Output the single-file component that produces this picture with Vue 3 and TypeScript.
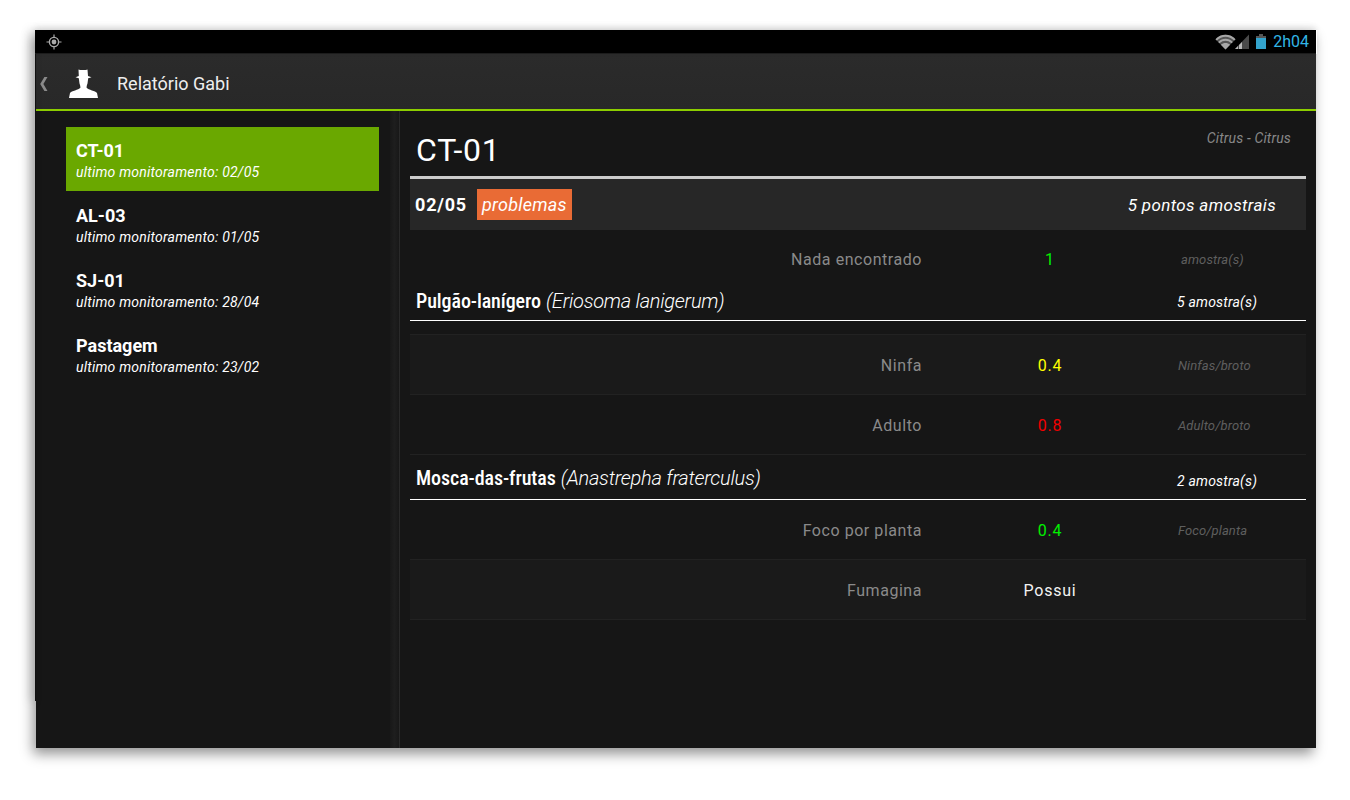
<script setup lang="ts">
interface Talhao {
  name: string
  last: string
}

interface Row {
  label: string
  value: string
  unit?: string
  color: string
  shaded?: boolean
}

interface Pest {
  name: string
  latin: string
  count: string
  cls: string
  rows: Row[]
}

const talhoes: Talhao[] = [
  { name: 'CT-01', last: '02/05' },
  { name: 'AL-03', last: '01/05' },
  { name: 'SJ-01', last: '28/04' },
  { name: 'Pastagem', last: '23/02' },
]

const pests: Pest[] = [
  {
    name: 'Pulgão-lanígero',
    latin: '(Eriosoma lanigerum)',
    count: '5 amostra(s)',
    cls: 'pest-first',
    rows: [
      { label: 'Ninfa', value: '0.4', unit: 'Ninfas/broto', color: '#ffff00', shaded: true },
      { label: 'Adulto', value: '0.8', unit: 'Adulto/broto', color: '#f20000' },
    ],
  },
  {
    name: 'Mosca-das-frutas',
    latin: '(Anastrepha fraterculus)',
    count: '2 amostra(s)',
    cls: 'pest-second',
    rows: [
      { label: 'Foco por planta', value: '0.4', unit: 'Foco/planta', color: '#00f000' },
      { label: 'Fumagina', value: 'Possui', color: '#f2f2f2', shaded: true },
    ],
  },
]
</script>

<template>
  <div class="page">
    <div class="device">
      <div class="edge"></div>

      <div class="statusbar">
        <svg class="locate" width="16" height="16" viewBox="0 0 16 16">
          <circle cx="8" cy="8" r="4.6" fill="none" stroke="#aaa" stroke-width="1.4" />
          <circle cx="8" cy="8" r="2.4" fill="#aaa" />
          <path d="M8 0.5v2.4M8 13.1v2.4M0.5 8h2.4M13.1 8h2.4" stroke="#aaa" stroke-width="1.2" />
        </svg>
        <div class="status-right">
          <svg class="wifi" width="21" height="16" viewBox="0 0 21 16">
            <path d="M0.5 5.2C6 -0.6 15 -0.6 20.5 5.2L10.5 15.5Z" fill="#555" />
            <path d="M0.5 5.2C6 -0.6 15 -0.6 20.5 5.2L19.2 6.5C14 1.4 7 1.4 1.8 6.5Z" fill="#a8a8a8" />
            <path d="M3.2 8C7.5 3.8 13.5 3.8 17.8 8L16.5 9.3C12.8 6 8.2 6 4.5 9.3Z" fill="#a8a8a8" />
            <path d="M5.9 10.7C8.6 8.3 12.4 8.3 15.1 10.7L10.5 15.5Z" fill="#a8a8a8" />
          </svg>
          <svg class="signal" width="15" height="15" viewBox="0 0 15 15">
            <path d="M14 0.5V15H0Z" fill="#4a4a4a" />
            <path d="M0 15L3 12V15ZM4 15V11L7 8V15Z" fill="#b8b8b8" />
          </svg>
          <svg class="battery" width="10" height="15" viewBox="0 0 10 15">
            <rect x="3" y="0" width="4" height="2" fill="#555" />
            <rect x="0" y="2" width="10" height="2" fill="#555" />
            <rect x="0" y="4" width="10" height="11" fill="#33a3cc" />
          </svg>
          <span class="clock">2h04</span>
        </div>
      </div>

      <header class="actionbar">
        <svg class="back" width="8" height="14" viewBox="0 0 8 14">
          <path d="M7.5 0L3.4 7L7.5 14H4.4L0.2 7L4.4 0Z" fill="#8a8a8a" />
        </svg>
        <svg class="avatar" width="29" height="29" viewBox="0 0 29 29">
          <path
            d="M9.5 0.5C11 1.2 17 1.2 18.5 0.5L19 7L22.5 8.2L19.2 9.2L18.5 14.5C18 16 17.6 17 17.6 18.8C19.5 21 26.5 22 28 24L29 29H0L1 24C2.5 22 9.5 21 11.4 18.8C11.4 17 11 16 10.5 14.5L9.8 9.2L6.5 8.2L9.8 7Z"
            fill="#fff"
          />
        </svg>
        <h1 class="app-title">Relatório Gabi</h1>
      </header>

      <div class="body">
        <aside class="sidebar">
          <div v-for="(t, i) in talhoes" :key="t.name" class="side-item" :class="{ active: i === 0 }">
            <div class="side-name">{{ t.name }}</div>
            <div class="side-sub">ultimo monitoramento: {{ t.last }}</div>
          </div>
        </aside>
        <div class="strip"></div>

        <main class="detail">
          <div class="detail-head">
            <h2 class="detail-title">CT-01</h2>
            <span class="detail-crop">Citrus - Citrus</span>
          </div>

          <div class="visit">
            <span class="visit-date">02/05</span>
            <span class="badge">problemas</span>
            <span class="visit-points">5 pontos amostrais</span>
          </div>

          <div class="row row-none">
            <span class="row-label">Nada encontrado</span>
            <span class="row-value" style="color: #00f000">1</span>
            <span class="row-unit unit-inset">amostra(s)</span>
          </div>

          <section v-for="p in pests" :key="p.name" class="pest" :class="p.cls">
            <div class="pest-head">
              <span class="pest-name"><b>{{ p.name }}</b> <i>{{ p.latin }}</i></span>
              <span class="pest-count">{{ p.count }}</span>
            </div>
            <div class="pest-rows">
              <div v-for="r in p.rows" :key="r.label" class="row" :class="{ shaded: r.shaded }">
                <span class="row-label">{{ r.label }}</span>
                <span class="row-value" :style="{ color: r.color }">{{ r.value }}</span>
                <span class="row-unit">{{ r.unit }}</span>
              </div>
            </div>
          </section>
        </main>
      </div>
    </div>
  </div>
</template>

<style>
html,
body {
  margin: 0;
  background: #fff;
}
</style>

<style scoped>
.page {
  width: 1350px;
  height: 800px;
  padding: 30px 0 0 36px;
  box-sizing: border-box;
  overflow: hidden;
  font-family: Roboto, "Liberation Sans", sans-serif;
}

.device {
  position: relative;
  width: 1280px;
  height: 718px;
  display: flex;
  flex-direction: column;
  background: #161616;
  box-shadow: -3px 6px 12px rgba(0, 0, 0, 0.42);
}

.edge {
  position: absolute;
  left: -1px;
  top: 0;
  width: 1px;
  height: 671px;
  background: #111;
  box-shadow: -4px 0 8px rgba(0, 0, 0, 0.6);
}

.statusbar {
  position: relative;
  flex: none;
  height: 23px;
  margin-left: -1px;
  display: flex;
  align-items: center;
  justify-content: space-between;
  background: #000;
  border-bottom: 1px solid #1c1c1c;
  box-shadow: 1px 0 0 #fff, 0 -3px 6px rgba(0, 0, 0, 0.1);
}

.locate {
  margin-left: 11px;
}

.status-right {
  display: flex;
  align-items: center;
  padding-right: 7px;
}

.signal {
  margin-left: -1px;
}

.battery {
  margin-left: 6px;
}

.clock {
  margin-left: 7px;
  font-size: 16px;
  color: #33b5e5;
}

.actionbar {
  flex: none;
  height: 57px;
  box-sizing: border-box;
  padding-top: 4px;
  display: flex;
  align-items: center;
  background: linear-gradient(#2b2b2b, #282828);
  border-bottom: 2px solid #8ccd00;
}

.back {
  margin-left: 4px;
}

.avatar {
  margin-left: 21px;
}

.app-title {
  margin: 0 0 0 19px;
  font-size: 18px;
  font-weight: 400;
  color: #eee;
}

.body {
  flex: 1;
  display: flex;
  min-height: 0;
}

.sidebar {
  width: 354px;
  flex: none;
  box-sizing: border-box;
  padding: 16px 11px 0 30px;
}

.side-item {
  height: 64px;
  margin-bottom: 1px;
  box-sizing: border-box;
  padding: 13px 10px 0;
  color: #fff;
}

.side-item.active {
  background: #6aa800;
}

.side-name {
  font-size: 18px;
  font-weight: 700;
  line-height: 21px;
}

.side-sub {
  font-size: 14px;
  font-style: italic;
  line-height: 22px;
  letter-spacing: 0.22px;
}

.strip {
  width: 9px;
  flex: none;
  background: linear-gradient(90deg, #181818, #1e1e1e 50%, #181818);
  border-right: 1px solid #2a2a2a;
}

.detail {
  width: 896px;
  flex: none;
  margin-left: 10px;
}

.detail-head {
  height: 65px;
  display: flex;
  justify-content: space-between;
  align-items: flex-start;
  padding: 0 15px 0 6px;
  box-sizing: border-box;
}

.detail-title {
  margin: 21px 0 0;
  font-size: 32px;
  font-weight: 400;
  line-height: 36px;
  letter-spacing: 0.8px;
  color: #fff;
}

.detail-crop {
  margin-top: 19px;
  font-size: 14px;
  font-style: italic;
  letter-spacing: 0.15px;
  color: #888;
}

.visit {
  height: 54px;
  box-sizing: border-box;
  display: flex;
  align-items: center;
  padding: 0 30px 0 5px;
  background: #272727;
  border-top: 3px solid #ccc;
  color: #fff;
}

.visit-date {
  font-size: 18px;
  font-weight: 700;
  letter-spacing: 0.8px;
}

.badge {
  margin-left: 10px;
  padding: 0 5px;
  height: 31px;
  line-height: 31px;
  font-size: 18px;
  font-style: italic;
  letter-spacing: 0.22px;
  background: #e96b35;
}

.visit-points {
  margin-left: auto;
  font-size: 17px;
  font-style: italic;
  letter-spacing: 0.35px;
}

.row {
  height: 60px;
  box-sizing: border-box;
  padding-top: 2px;
  display: grid;
  grid-template-columns: 512px 256px 128px;
  align-items: center;
  border-bottom: 1px solid #222;
}

.row.shaded {
  background: #1a1a1a;
}

.row-none {
  height: 58px;
  padding-top: 0;
  border-bottom: 0;
}

.row-label {
  text-align: right;
  font-size: 16px;
  letter-spacing: 0.55px;
  color: #8a8a8a;
}

.row-value {
  text-align: center;
  font-size: 16px;
  letter-spacing: 0.8px;
}

.row-unit {
  font-size: 13px;
  font-style: italic;
  letter-spacing: 0.1px;
  color: #5f5f5f;
}

.unit-inset {
  padding-left: 3px;
}

.pest-head {
  display: flex;
  justify-content: space-between;
  align-items: center;
  box-sizing: border-box;
  padding: 0 49px 0 6px;
  border-bottom: 1px solid #fff;
  color: #fff;
}

.pest-name {
  font-size: 20px;
  line-height: 26px;
}

.pest-name b {
  font-weight: 500;
  font-stretch: condensed;
  letter-spacing: -0.08px;
}

.pest-name i {
  font-weight: 300;
  letter-spacing: -0.25px;
}

.pest-count {
  width: 80px;
  font-size: 14px;
  font-style: italic;
  letter-spacing: 0.2px;
  white-space: nowrap;
}

.pest-first .pest-head {
  height: 33px;
  padding-bottom: 6px;
}

.pest-first .pest-count {
  padding-top: 2px;
}

.pest-first .pest-rows {
  margin-top: 13px;
  border-top: 1px solid #222;
}

.pest-second .pest-head {
  height: 45px;
  padding-top: 2px;
}

.pest-second .pest-count {
  padding-top: 6px;
}
</style>
